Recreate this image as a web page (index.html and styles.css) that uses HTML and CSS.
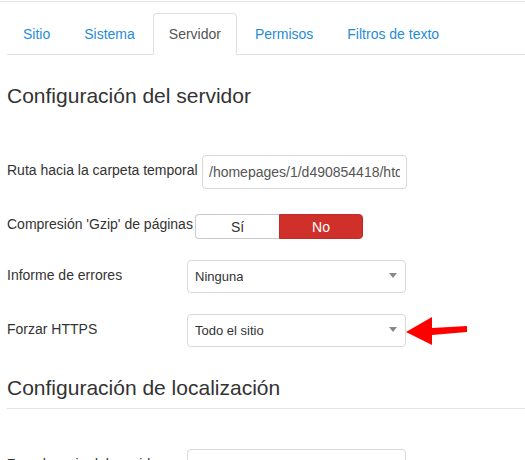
FILE: index.html
```html
<!DOCTYPE html>
<html lang="es">
<head>
<meta charset="utf-8">
<title>Configuración global</title>
<link rel="stylesheet" href="styles.css">
</head>
<body>
<div class="topline"></div>
<div class="page">
  <ul class="tabs">
    <li class="tab"><a class="tab-link">Sitio</a></li>
    <li class="tab"><a class="tab-link">Sistema</a></li>
    <li class="tab tab-active"><a class="tab-link">Servidor</a></li>
    <li class="tab"><a class="tab-link">Permisos</a></li>
    <li class="tab"><a class="tab-link">Filtros de texto</a></li>
  </ul>

  <h2 class="legend legend-first">Configuración del servidor</h2>

  <div class="row row-path">
    <label class="label label-path">Ruta hacia la carpeta temporal</label>
    <input class="text-input" type="text" value="/homepages/1/d490854418/htdocs/tmp">
  </div>

  <div class="row row-gzip">
    <label class="label label-gzip">Compresión 'Gzip' de páginas</label>
    <div class="toggle">
      <span class="toggle-btn toggle-yes">Sí</span>
      <span class="toggle-btn toggle-no">No</span>
    </div>
  </div>

  <div class="row row-errors">
    <label class="label label-select">Informe de errores</label>
    <div class="select"><span class="select-text">Ninguna</span><span class="caret"></span></div>
  </div>

  <div class="row row-https">
    <label class="label label-select">Forzar HTTPS</label>
    <div class="select"><span class="select-text">Todo el sitio</span><span class="caret"></span></div>
  </div>

  <h2 class="legend legend-ruled">Configuración de localización</h2>

  <div class="row row-zone">
    <label class="label label-select">Zona horaria del servidor</label>
    <div class="select"><span class="select-text"></span><span class="caret"></span></div>
  </div>
</div>

<svg class="arrow" width="70" height="34" viewBox="0 0 70 34" xmlns="http://www.w3.org/2000/svg">
  <polygon points="0,16 26,1 26,12 61,10 61,16 26,19 26,29" fill="#ff0000"/>
</svg>
</body>
</html>
```

FILE: styles.css
```css
html, body {
  margin: 0;
  padding: 0;
  background: #ffffff;
}

body {
  height: 460px;
  overflow: hidden;
  position: relative;
  padding-top: 1px;
  box-sizing: border-box;
  font-family: "Liberation Sans", Arial, sans-serif;
  color: #333333;
}

.topline {
  height: 1px;
  background: #e3e3e3;
}

.page {
  padding-left: 7px;
}

/* Tabs */
.tabs {
  list-style: none;
  margin: 11px 0 0 0;
  padding: 0;
  display: flex;
  border-bottom: 1px solid #e0e0e0;
}

.tab {
  margin: 0 2px -1px 0;
}

.tab-link {
  display: block;
  padding: 10px 15px;
  line-height: 20px;
  font-size: 14px;
  color: #1f8dd6;
  border: 1px solid transparent;
  border-radius: 4px 4px 0 0;
  white-space: nowrap;
}

.tab-active .tab-link {
  color: #555555;
  background: #ffffff;
  border-color: #e0e0e0;
  border-bottom-color: #ffffff;
}

/* Headings */
.legend {
  margin: 0;
  font-size: 21px;
  font-weight: normal;
  line-height: 30px;
  color: #333333;
}

.legend-first {
  margin-top: 26px;
}

.legend-ruled {
  margin-top: 26px;
  padding-bottom: 5px;
  border-bottom: 1px solid #e5e5e5;
}

/* Form rows */
.row {
  display: flex;
  align-items: flex-start;
}

.label {
  flex: none;
  font-size: 14px;
  line-height: 20px;
  padding-top: 5px;
  white-space: nowrap;
  color: #333333;
}

.label-path { width: 195px; }
.label-gzip { width: 188px; padding-top: 0; }
.label-select { width: 180px; }

.row-path { margin-top: 44px; }
.row-gzip { margin-top: 25px; }
.row-errors { margin-top: 21px; }
.row-https { margin-top: 21px; }
.row-zone { margin-top: 40px; }

.text-input {
  box-sizing: border-box;
  width: 205px;
  height: 34px;
  margin: 0;
  padding: 0 6px;
  border: 1px solid #d9d9d9;
  border-radius: 4px;
  font-family: "Liberation Sans", Arial, sans-serif;
  font-size: 14px;
  color: #555555;
  background: #ffffff;
  outline: none;
}

/* Toggle */
.toggle {
  display: flex;
}

.toggle-btn {
  box-sizing: border-box;
  width: 84px;
  height: 25px;
  display: flex;
  align-items: center;
  justify-content: center;
  font-size: 14px;
}

.toggle-yes {
  border: 1px solid #cccccc;
  border-right: none;
  border-radius: 4px 0 0 4px;
  color: #333333;
  background: #ffffff;
}

.toggle-no {
  border: 1px solid #c22a24;
  border-radius: 0 4px 4px 0;
  color: #ffffff;
  background: #d0302a;
}

/* Select */
.select {
  box-sizing: border-box;
  width: 219px;
  height: 33px;
  padding: 0 8px 0 7px;
  border: 1px solid #d9d9d9;
  border-radius: 4px;
  display: flex;
  align-items: center;
  justify-content: space-between;
  font-size: 13px;
  color: #333333;
  background: #ffffff;
}

.select-text {
  white-space: nowrap;
  overflow: hidden;
}

.caret {
  flex: none;
  width: 0;
  height: 0;
  margin-top: -2px;
  border-left: 4px solid transparent;
  border-right: 4px solid transparent;
  border-top: 5px solid #888888;
}

/* Annotation arrow */
.arrow {
  position: absolute;
  left: 406px;
  top: 316px;
}
```
